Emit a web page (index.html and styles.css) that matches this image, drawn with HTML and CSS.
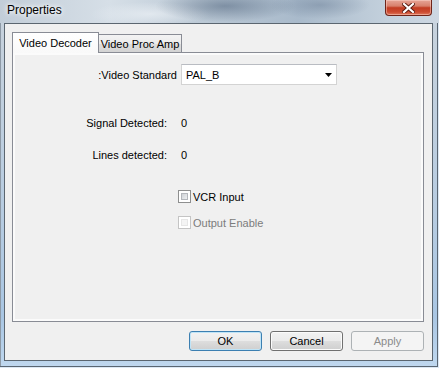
FILE: index.html
```html
<!DOCTYPE html>
<html lang="en">
<head>
    <meta charset="UTF-8">
    <title>Properties</title>
    <link rel="stylesheet" href="styles.css">
</head>
<body>
<div class="window">
    <div class="titlebar">
        <span class="title">Properties</span>
        <button class="close-btn" aria-label="Close">
            <svg width="13" height="10" viewBox="0 0 13 10">
                <path d="M2 1 L11 9 M11 1 L2 9" stroke="#5a1a10" stroke-width="4" stroke-linecap="square"/>
                <path d="M2 1 L11 9 M11 1 L2 9" stroke="#fff" stroke-width="2.2" stroke-linecap="square"/>
            </svg>
        </button>
    </div>
    <div class="frame">
        <div class="client">
            <div class="tabs">
                <div class="tab tab-active">Video Decoder</div>
                <div class="tab tab-second">Video Proc Amp</div>
            </div>
            <div class="pane">
                <div class="field-row">
                    <span class="field-label">:Video Standard</span>
                    <div class="combo">
                        <span>PAL_B</span>
                        <svg width="7" height="4" viewBox="0 0 7 4"><polygon points="0,0 7,0 3.5,4" fill="#000"/></svg>
                    </div>
                </div>
                <div class="info-row">
                    <span class="info-label">Signal Detected:</span>
                    <span>0</span>
                </div>
                <div class="info-row info-row-tight">
                    <span class="info-label">Lines detected:</span>
                    <span>0</span>
                </div>
                <label class="check">
                    <span class="box"></span>
                    <span>VCR Input</span>
                </label>
                <label class="check check-disabled">
                    <span class="box"></span>
                    <span>Output Enable</span>
                </label>
            </div>
            <div class="actions">
                <button class="btn btn-default">OK</button>
                <button class="btn">Cancel</button>
                <button class="btn btn-disabled">Apply</button>
            </div>
        </div>
    </div>
</div>
</body>
</html>
```

FILE: styles.css
```css
body {
    margin: 0;
    font-family: "Liberation Sans", Arial, sans-serif;
    font-size: 11px;
    color: #000;
}

.window {
    width: 439px;
    height: 368px;
    display: flex;
    flex-direction: column;
}

.titlebar {
    height: 23px;
    display: flex;
    justify-content: space-between;
    align-items: flex-start;
    padding: 0 7px;
    background:
        radial-gradient(ellipse 70px 16px at 225px 6px, rgba(80, 100, 125, 0.55), transparent),
        radial-gradient(ellipse 50px 14px at 320px 5px, rgba(100, 120, 145, 0.45), transparent),
        radial-gradient(ellipse 60px 12px at 150px 14px, rgba(235, 240, 245, 0.7), transparent),
        linear-gradient(to right, #c2cdd8, #d6dfe7 25%, #b9c7d4 48%, #a9bacb 68%, #c3d0dc 88%, #cdd7e2);
}
.title {
    font-size: 12px;
    line-height: 12px;
    margin-top: 4px;
    text-shadow: 0 0 4px #fff, 0 0 7px #fff;
}
.close-btn {
    width: 47px;
    height: 16px;
    padding: 0;
    display: flex;
    align-items: center;
    justify-content: center;
    border: 1px solid #6e2419;
    border-top: none;
    border-radius: 0 0 4px 4px;
    background: linear-gradient(#e6a597, #d8806c 40%, #c23c22 52%, #cc4b31 80%, #e07a5e);
    box-shadow: inset 0 0 0 1px rgba(255, 220, 210, 0.45);
}

.frame {
    flex: 1;
    display: flex;
    padding: 0 6px 7px 4px;
    background: linear-gradient(to bottom, #c7d2dd, #b7cce1 55%, #a9c6e3 85%, #c0d8ef);
    box-shadow: inset -1px -1px 0 #dce8f4, inset -2px -2px 0 #5a6672, inset 1px 0 0 #8e9aa6;
}

.client {
    flex: 1;
    display: flex;
    flex-direction: column;
    border: 1px solid #5b6670;
    background: #f0f0f0;
    padding: 8px 8px 9px 7px;
}

.tabs {
    display: flex;
    align-items: flex-end;
    height: 21px;
}
.tab {
    box-sizing: border-box;
    height: 19px;
    line-height: 18px;
    text-align: center;
    border: 1px solid #898c95;
    border-bottom: none;
    background: linear-gradient(#f3f3f3, #ebebeb 50%, #dddddd 50%, #d2d2d2);
}
.tab-active {
    width: 87px;
    height: 21px;
    line-height: 20px;
    position: relative;
    z-index: 1;
    background: linear-gradient(#ffffff, #f9f9f9);
}
.tab-second {
    width: 84px;
    margin-left: -1px;
}

.pane {
    position: relative;
    margin-top: -1px;
    height: 270px;
    box-sizing: border-box;
    border: 1px solid #898c95;
    box-shadow: inset 0 0 0 2px #fbfbfb;
    padding-top: 11px;
}

.field-row {
    display: flex;
    align-items: center;
    height: 21px;
}
.field-label {
    width: 164px;
    text-align: right;
    margin-right: 4px;
}
.combo {
    box-sizing: border-box;
    width: 156px;
    height: 21px;
    display: flex;
    align-items: center;
    justify-content: space-between;
    padding: 0 4px;
    background: #fff;
    border: 1px solid #d3d3d3;
    border-top-color: #b9bcc2;
}

.info-row {
    display: flex;
    height: 14px;
    line-height: 14px;
    margin-top: 31px;
}
.info-row-tight {
    margin-top: 18px;
}
.info-label {
    width: 154px;
    text-align: right;
    margin-right: 14px;
}

.check {
    display: flex;
    align-items: center;
    gap: 2px;
    height: 13px;
    margin-left: 165px;
    margin-top: 28px;
}
.check + .check {
    margin-top: 13px;
}
.box {
    box-sizing: border-box;
    width: 13px;
    height: 13px;
    padding: 2px;
    border: 1px solid #8e8f8f;
    background: #fff;
}
.box::after {
    content: "";
    display: block;
    width: 100%;
    height: 100%;
    box-sizing: border-box;
    border: 1px solid #b4b7bc;
    background: linear-gradient(135deg, #cfd2d6, #eef0f2);
}
.check-disabled {
    color: #7c7c7c;
}
.check-disabled .box {
    border-color: #c4c4c4;
}
.check-disabled .box::after {
    border-color: #e6e6e6;
    background: #f4f4f4;
}

.actions {
    display: flex;
    justify-content: flex-end;
    gap: 8px;
    margin-top: 9px;
}
.btn {
    width: 73px;
    height: 20px;
    box-sizing: border-box;
    padding: 0;
    font: inherit;
    color: #000;
    border: 1px solid #707070;
    border-radius: 3px;
    background: linear-gradient(#f2f2f2, #ebebeb 48%, #dddddd 52%, #cfcfcf);
    box-shadow: inset 0 0 0 1px #fbfbfb;
}
.btn-default {
    border-color: #3c7fb1;
    box-shadow: inset 0 0 0 1px #bfe4f7;
}
.btn-disabled {
    color: #8b8b8b;
    border-color: #adb2b5;
    background: #f4f4f4;
    box-shadow: none;
}
```
